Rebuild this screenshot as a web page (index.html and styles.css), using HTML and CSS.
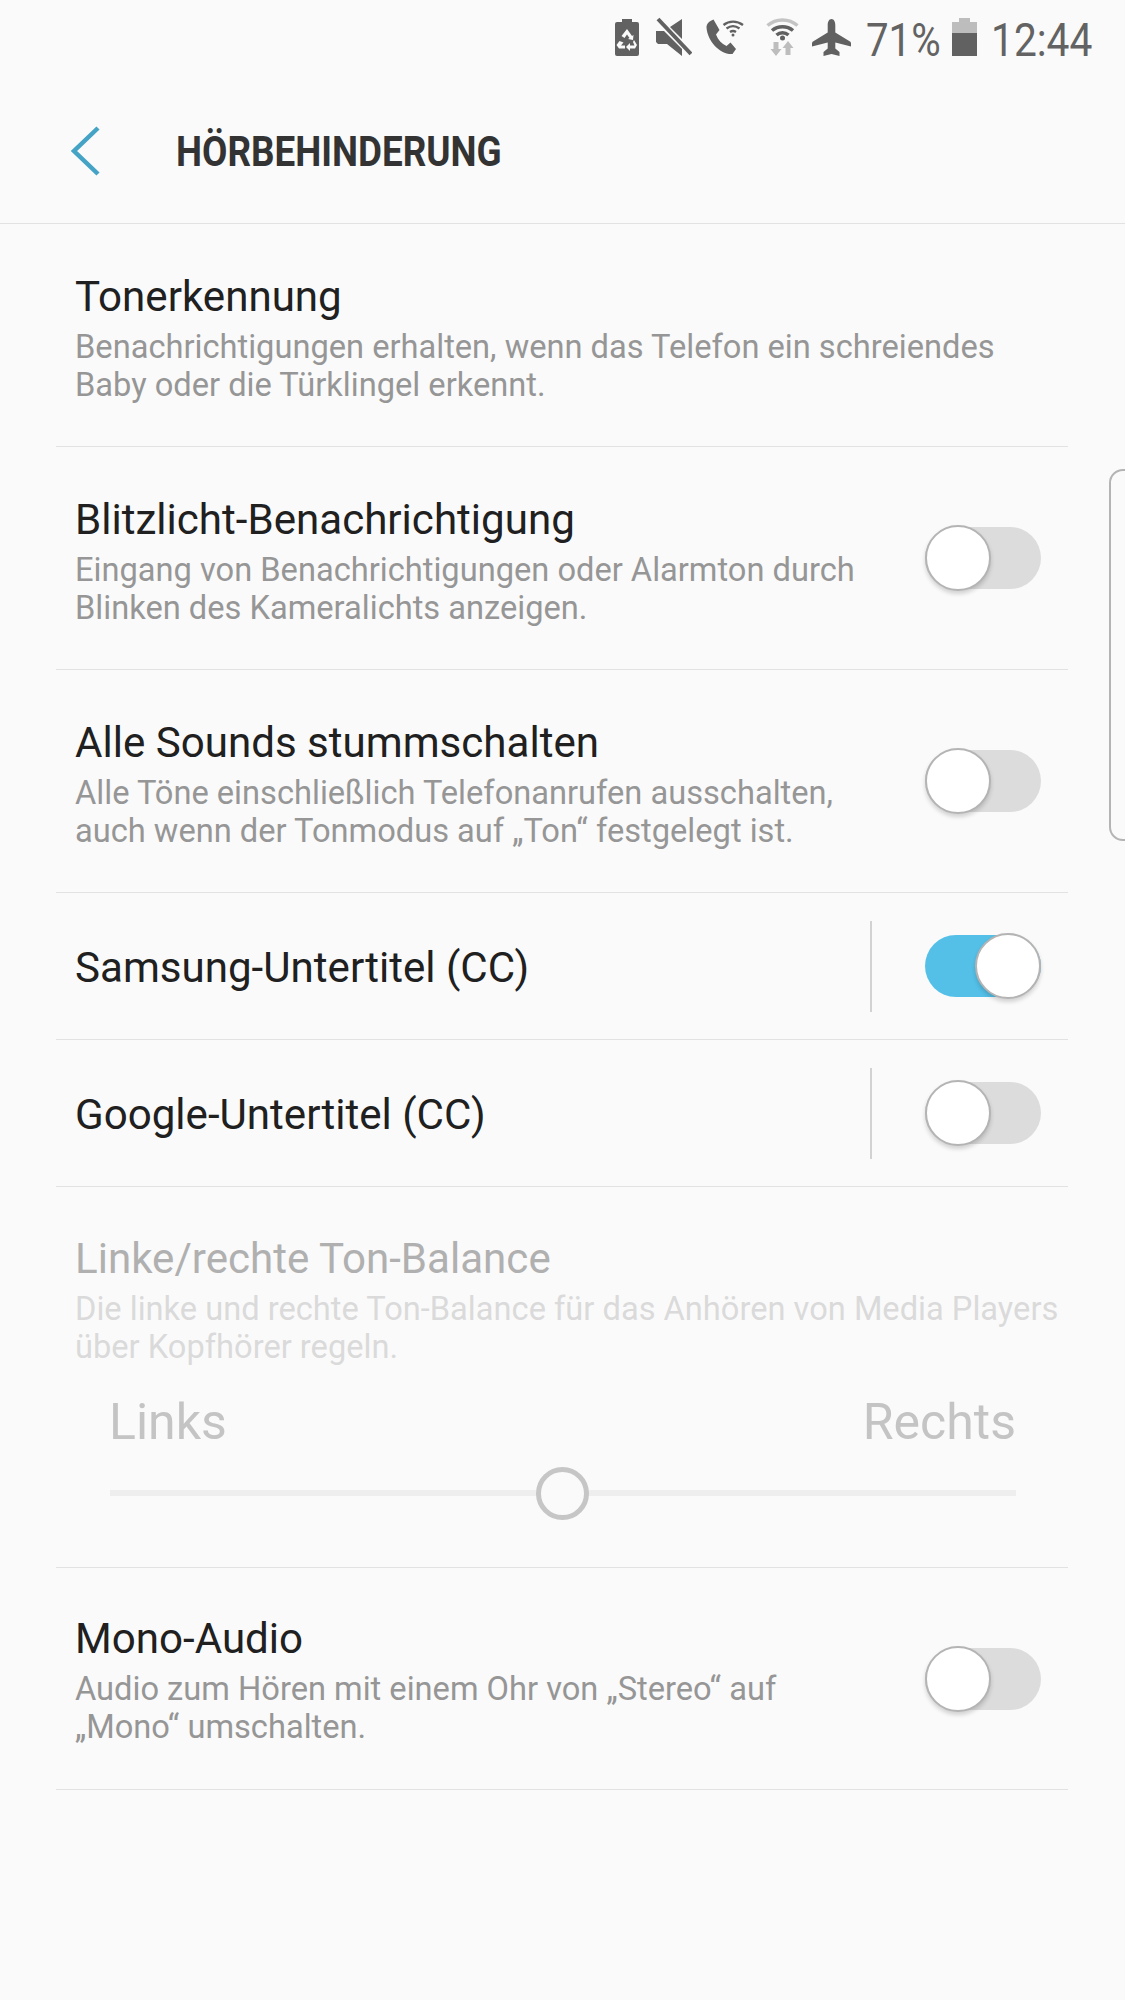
FILE: index.html
```html
<!DOCTYPE html>
<html lang="de">
<head>
<meta charset="utf-8">
<title>Hörbehinderung</title>
<link rel="stylesheet" href="styles.css">
</head>
<body>
<div class="screen">
  <div class="status">
    <svg class="ico gap17" width="24" height="40" viewBox="0 0 24 40"><path class="d" d="M7 2h10v3h5a2 2 0 0 1 2 2v30a2 2 0 0 1-2 2H2a2 2 0 0 1-2-2V7a2 2 0 0 1 2-2h5z"/><path class="w" d="M12 12l5 7 1.500-1-.5 5-5-1 1.500-1-2.500-3.500-2.500 3.500-3-2zM19 23l3 5-2 3.500h-5v2.500l-4-4 4-4v2.500h4.500l-1.500-3.500zM4.500 24l4 1.500-2.500 3h4v3H4l-2.500-3.500z"/></svg>
    <svg class="ico gap14" width="36" height="40" viewBox="0 0 36 40"><path class="d" d="M26 2V22L14 10zM0 14H8L26 32V39L11 27H2L0 25z"/><path class="line" d="M2 2L35 37"/></svg>
    <svg class="ico gap22" width="38" height="40" viewBox="0 0 38 40"><path class="d" d="M7.500 2.500L13.500 13 10 17.500C12 23 15.500 26.500 20.500 29L24.500 25.500 30 32 26.500 37C14 38 1.500 24 .5 10.500 .5 7 3 4 7.500 2.500z"/><path class="arc thin" d="M17.500 8C23 3.500 31 3.500 37 8M20.500 11.500C24.500 8.500 29.500 8.500 33.500 11.500M24 15C26 13.700 28 13.700 30 15"/><circle class="d" cx="27" cy="18" r="1.500"/></svg>
    <svg class="ico gap13" width="33" height="40" viewBox="0 0 33 40"><path class="arc lite" d="M1.500 8.500C10 1 23 1 31.500 8.500"/><path class="arc" d="M6 13.500C12 8.500 21 8.500 27 13.500M10.500 18C14 15 19 15 22.500 18"/><circle class="d" cx="16.500" cy="21" r="2.500"/><path class="l" d="M7.500 25H12.500V32H15.500L10 39 4.500 32H7.500zM22 24L27.500 31H24.500V38H19.500V31H16.500z"/></svg>
    <svg class="ico gap15" width="39" height="40" viewBox="0 0 39 40"><path class="d" d="M19.500 2C22 2 23.300 5 23.300 8V15.500L38 24.500C39 25.200 39 26 39 27L39 29.500 23.300 25.500V31.500L27.500 35V39L19.500 37 11.500 39V35L15.700 31.500V25.500L0 29.500 0 27C0 26 0 25.200 1 24.500L15.700 15.500V8C15.700 5 17 2 19.500 2z"/></svg>
    <span class="num pct">71%</span>
    <svg class="ico gap14" width="25" height="40" viewBox="0 0 25 40"><path class="l" d="M7 1H18V5H25V17H0V5H7z"/><rect class="d" x="0" y="16" width="25" height="23"/></svg>
    <span class="num clock">12:44</span>
  </div>

  <header class="appbar">
    <svg class="back" width="30" height="50" viewBox="0 0 30 50"><path d="M28 2L4 25l24 23"/></svg>
    <h1 class="title">HÖRBEHINDERUNG</h1>
  </header>

  <main class="list">
    <section class="row row-tall">
      <div class="text">
        <div class="name">Tonerkennung</div>
        <div class="desc">Benachrichtigungen erhalten, wenn das Telefon ein schreiendes<br>Baby oder die Türklingel erkennt.</div>
      </div>
    </section>
    <section class="row row-tall">
      <div class="text">
        <div class="name">Blitzlicht-Benachrichtigung</div>
        <div class="desc">Eingang von Benachrichtigungen oder Alarmton durch<br>Blinken des Kameralichts anzeigen.</div>
      </div>
      <div class="toggle"><span class="thumb"></span></div>
    </section>
    <section class="row row-tall">
      <div class="text">
        <div class="name">Alle Sounds stummschalten</div>
        <div class="desc">Alle Töne einschließlich Telefonanrufen ausschalten,<br>auch wenn der Tonmodus auf „Ton“ festgelegt ist.</div>
      </div>
      <div class="toggle"><span class="thumb"></span></div>
    </section>
    <section class="row row-short">
      <div class="text"><div class="name">Samsung-Untertitel (CC)</div></div>
      <div class="vline"></div>
      <div class="toggle on"><span class="thumb"></span></div>
    </section>
    <section class="row row-short">
      <div class="text"><div class="name">Google-Untertitel (CC)</div></div>
      <div class="vline"></div>
      <div class="toggle"><span class="thumb"></span></div>
    </section>
    <section class="balance">
      <div class="name">Linke/rechte Ton-Balance</div>
      <div class="desc">Die linke und rechte Ton-Balance für das Anhören von Media Players<br>über Kopfhörer regeln.</div>
      <div class="ends"><span>Links</span><span>Rechts</span></div>
      <div class="slider"><span class="knob"></span></div>
    </section>
    <section class="row row-last">
      <div class="text">
        <div class="name">Mono-Audio</div>
        <div class="desc">Audio zum Hören mit einem Ohr von „Stereo“ auf<br>„Mono“ umschalten.</div>
      </div>
      <div class="toggle"><span class="thumb"></span></div>
    </section>
  </main>
  <div class="edge"></div>
</div>
</body>
</html>
```
FILE: styles.css
```css
* { box-sizing: border-box; }
html, body { margin: 0; padding: 0; }
body { background: #fafafa; font-family: Roboto, "Liberation Sans", sans-serif; }
.screen { position: relative; width: 1125px; height: 2000px; overflow: hidden; background: #fafafa; }

.status { height: 80px; padding: 17px 32px 0 0; display: flex; justify-content: flex-end; align-items: flex-start; color: #636363; }
.ico { display: block; flex: none; }
.gap17 { margin-right: 17px; }
.gap14 { margin-right: 14px; }
.gap22 { margin-right: 22px; }
.gap13 { margin-right: 13px; }
.gap15 { margin-right: 15px; }
.d { fill: #616161; }
.w { fill: #fafafa; }
.l { fill: #bdbdbd; }
.line { stroke: #616161; stroke-width: 4; fill: none; }
.arc { stroke: #616161; stroke-width: 3.500; fill: none; }
.arc.thin { stroke-width: 2.300; }
.arc.lite { stroke: #c4c4c4; }
.num { display: block; flex: none; font-size: 46px; line-height: 46px; font-weight: 400; transform: scaleX(.875); transform-origin: left top; white-space: nowrap; }
.pct { width: 74px; margin-right: 12px; }
.clock { width: 102px; transform: scaleX(.885); }

.appbar { height: 144px; display: flex; align-items: center; border-bottom: 1px solid #e2e2e2; padding: 0 0 2px 70px; }
.back { display: block; margin-right: 76px; }
.back path { fill: none; stroke: #45a3c6; stroke-width: 4.500; }
.title { margin: 2px 0 0; font-size: 42px; line-height: 48px; font-weight: 700; color: #333; transform: scaleX(.877); transform-origin: left center; white-space: nowrap; }

.list { margin: 0 56px; width: 1012px; }
.row { display: flex; align-items: center; border-bottom: 1px solid #e2e2e2; padding: 0 27px 0 19px; }
.row-tall { height: 223px; }
.row-last { height: 222px; }
.row-short { height: 147px; }
.text { flex: 1; min-width: 0; }
.row-tall .text { padding-top: 6px; }
.row-last .text { padding-top: 3px; }
.name { font-size: 42.100px; line-height: 50px; color: #202020; white-space: nowrap; }
.desc { font-size: 32.640px; line-height: 38px; color: #969696; margin-top: 6px; white-space: nowrap; }
.row-short .name { margin-top: 4px; }

.vline { width: 2px; height: 91px; background: #d2d2d2; margin-right: 53px; }
.toggle { position: relative; width: 116px; height: 62px; border-radius: 31px; background: #dcdcdc; flex: none; }
.thumb { position: absolute; left: 0; top: -2px; width: 66px; height: 66px; border-radius: 50%; background: #fff; border: 2px solid #b4b4b4; box-shadow: 0 3px 4px rgba(0,0,0,.16); }
.toggle.on { background: #54c0e8; }
.toggle.on .thumb { left: 50px; }

.balance { height: 381px; border-bottom: 1px solid #e2e2e2; padding: 47px 0 0 19px; }
.balance .name { color: #b0b0b0; }
.balance .desc { color: #dadada; margin-top: 6px; }
.ends { display: flex; justify-content: space-between; padding: 0 52px 0 34px; margin-top: 26px; font-size: 50px; line-height: 60px; color: #c4c4c4; }
.slider { position: relative; height: 6px; background: #eeeeee; margin: 38px 52px 0 35px; }
.knob { position: absolute; left: 426px; top: -23px; width: 53px; height: 53px; border-radius: 50%; background: #fafafa; border: 5px solid #c6c6c6; }

.edge { position: absolute; left: 1109px; top: 469px; width: 30px; height: 372px; border: 2px solid #b4b4b4; border-radius: 14px; }
```
